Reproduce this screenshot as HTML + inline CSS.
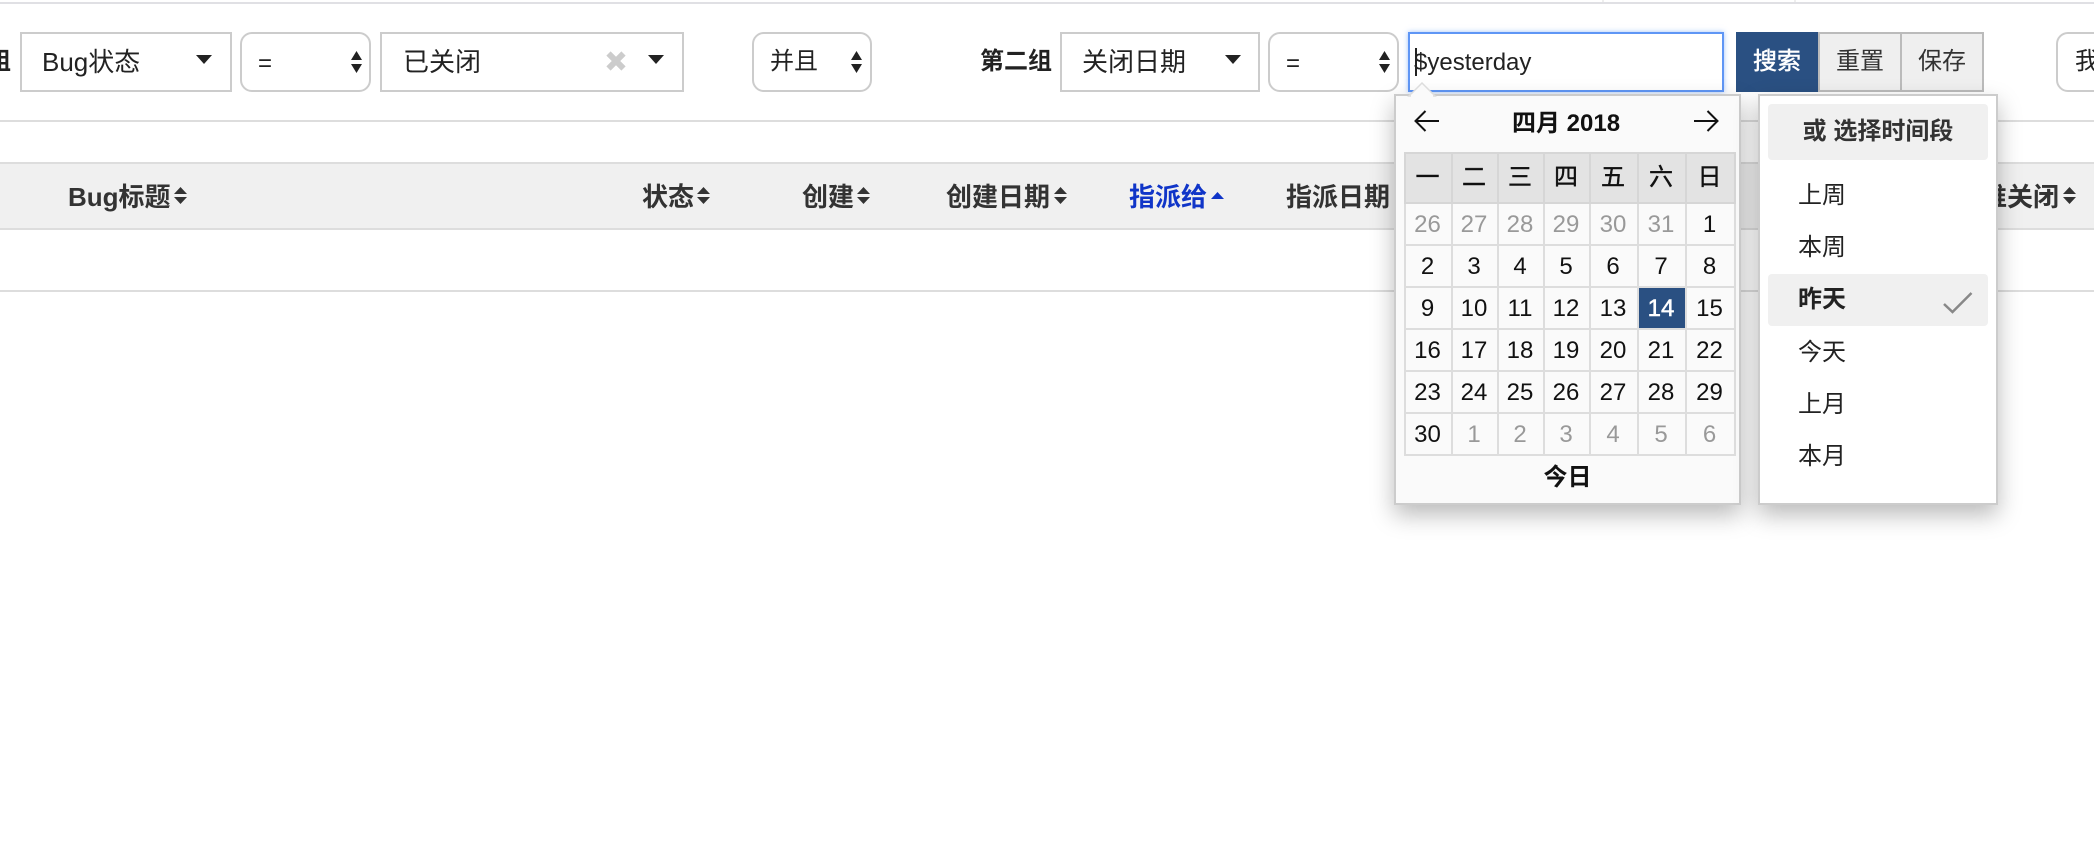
<!DOCTYPE html>
<html lang="zh"><head><meta charset="utf-8"><title>Bug</title>
<style>
html,body{margin:0;padding:0;background:#fff;}
body{position:relative;width:2094px;height:848px;overflow:hidden;font-family:"Liberation Sans","Noto Sans CJK SC",sans-serif;color:#222;font-size:26px;}
.a{position:absolute;box-sizing:border-box;}
.line{position:absolute;left:0;width:2094px;height:2px;background:#ddd;}
.sel{position:absolute;box-sizing:border-box;top:32px;height:60px;border:2px solid #ccc;background:#fff;line-height:56px;white-space:nowrap;}
.nat{border-radius:12px;font-size:24px;}
.t{position:absolute;white-space:nowrap;line-height:30px;}
.h{position:absolute;top:182px;font-weight:bold;color:#333;font-size:26px;line-height:30px;white-space:nowrap;}
.btn{position:absolute;box-sizing:border-box;top:32px;height:60px;border:2px solid #bbb;background:#efefef;font-size:24px;line-height:56px;text-align:center;color:#333;}
svg{position:absolute;display:block;overflow:visible;}
.panel{position:absolute;box-sizing:border-box;top:94px;height:411px;border:2px solid #ccc;box-shadow:0 10px 22px rgba(0,0,0,.27);}
table{position:absolute;left:8px;top:56px;width:330px;border-collapse:collapse;table-layout:fixed;font-size:24px;color:#111;}
td,th{border:2px solid #ddd;padding:0 2px 0 0;text-align:center;font-weight:normal;line-height:30px;}
th{background:#e3e3e3;height:48px;border-color:#d6d6d6;-webkit-text-stroke:.4px #111;}
td{height:38px;padding-top:2px;}
td.o{color:#999;}
td.s{background:#2a5082;color:#fff;-webkit-text-stroke:.5px #fff;}
.it{position:absolute;left:38px;font-size:24px;line-height:30px;color:#222;}
</style></head><body>
<div class="line" style="top:2px;height:2px;background:#e0e0e4"></div>
<div class="a" style="left:1602px;top:0;width:2px;height:2px;background:#eee"></div>
<div class="a" style="left:1794px;top:0;width:2px;height:2px;background:#eee"></div>
<div class="line" style="top:120px"></div>
<div class="a" style="left:0;top:162px;width:2094px;height:68px;background:#f0f0f0;border-top:2px solid #ddd;border-bottom:2px solid #ddd"></div>
<div class="line" style="top:290px"></div>

<div class="t" style="right:2083px;top:47px;font-size:24px;font-weight:bold">组</div>
<div class="sel" style="left:20px;width:212px;padding-left:20px">Bug状态</div>
<svg style="left:196px;top:55px" width="16" height="9"><path d="M0 0H16L8 9Z" fill="#222"/></svg>
<div class="sel nat" style="left:240px;width:131px;padding-left:16px;line-height:59px">=</div>
<svg style="left:351px;top:51px" width="11" height="22"><path d="M5.5 0L11 9H0Z M0 13H11L5.5 22Z" fill="#222"/></svg>
<div class="sel" style="left:380px;width:304px;padding-left:21px">已关闭</div>
<svg style="left:606px;top:51px" width="20" height="20"><path d="M2.5 2.5L17.5 17.5M17.5 2.5L2.5 17.5" stroke="#ccc" stroke-width="6"/></svg>
<svg style="left:648px;top:55px" width="16" height="9"><path d="M0 0H16L8 9Z" fill="#222"/></svg>

<div class="sel nat" style="left:752px;width:120px;padding-left:16px">并且</div>
<svg style="left:851px;top:51px" width="11" height="22"><path d="M5.5 0L11 9H0Z M0 13H11L5.5 22Z" fill="#222"/></svg>
<div class="t" style="left:980px;top:47px;font-size:24px;font-weight:bold">第二组</div>
<div class="sel" style="left:1060px;width:200px;padding-left:20px">关闭日期</div>
<svg style="left:1225px;top:55px" width="16" height="9"><path d="M0 0H16L8 9Z" fill="#222"/></svg>
<div class="sel nat" style="left:1268px;width:131px;padding-left:16px;line-height:59px">=</div>
<svg style="left:1379px;top:51px" width="11" height="22"><path d="M5.5 0L11 9H0Z M0 13H11L5.5 22Z" fill="#222"/></svg>

<div class="sel" style="left:1408px;width:316px;border-color:#5f96f5;box-shadow:0 0 5px rgba(90,147,245,.55);font-size:24px;padding-left:4px;line-height:57px">$yesterday</div>
<div class="a" style="left:1415px;top:48px;width:2px;height:28px;background:#222"></div>

<div class="btn" style="left:1736px;width:82px;background:#2a5082;border-color:#2a5082;color:#fff;-webkit-text-stroke:.5px #fff">搜索</div>
<div class="btn" style="left:1818px;width:84px">重置</div>
<div class="btn" style="left:1900px;width:84px">保存</div>
<div class="sel nat" style="left:2056px;width:80px;padding-left:17px">我</div>

<div class="h" style="left:68px">Bug标题</div>
<svg style="left:174px;top:187px" width="13" height="17"><path d="M6.5 0L13 7H0Z M0 10H13L6.5 17Z" fill="#333"/></svg>
<div class="h" style="left:642px">状态</div>
<svg style="left:697px;top:187px" width="13" height="17"><path d="M6.5 0L13 7H0Z M0 10H13L6.5 17Z" fill="#333"/></svg>
<div class="h" style="left:802px">创建</div>
<svg style="left:857px;top:187px" width="13" height="17"><path d="M6.5 0L13 7H0Z M0 10H13L6.5 17Z" fill="#333"/></svg>
<div class="h" style="left:946px">创建日期</div>
<svg style="left:1054px;top:187px" width="13" height="17"><path d="M6.5 0L13 7H0Z M0 10H13L6.5 17Z" fill="#333"/></svg>
<div class="h" style="left:1129px;color:#1035c8">指派给</div>
<svg style="left:1211px;top:192px" width="13" height="7"><path d="M6.5 0L13 7H0Z" fill="#1035c8"/></svg>
<div class="h" style="left:1286px">指派日期</div>
<div class="h" style="left:1955px">由谁关闭</div>
<svg style="left:2063px;top:187px" width="13" height="17"><path d="M6.5 0L13 7H0Z M0 10H13L6.5 17Z" fill="#333"/></svg>

<svg style="left:1409px;top:82px;z-index:3" width="26" height="14"><path d="M0 14L13 1L26 14Z" fill="#fafafa" stroke="#ddd" stroke-width="1.5"/><path d="M2 14H24" stroke="#fafafa" stroke-width="3"/></svg>
<div class="panel" style="left:1394px;width:347px;background:#fafafa;z-index:2">
  <svg style="left:18px;top:14px" width="26" height="22"><path d="M25 11H2M11.5 1L1.5 11L11.5 21" fill="none" stroke="#111" stroke-width="2"/></svg>
  <div class="t" style="left:116px;top:13px;font-size:24px;font-weight:bold;color:#111">四月 2018</div>
  <svg style="left:297px;top:14px" width="26" height="22"><path d="M1 11H24M14.5 1L24.5 11L14.5 21" fill="none" stroke="#111" stroke-width="2"/></svg>
  <table>
    <colgroup><col style="width:47px"><col style="width:46px"><col style="width:46px"><col style="width:46px"><col style="width:48px"><col style="width:48px"><col style="width:49px"></colgroup>
    <tr><th>一</th><th>二</th><th>三</th><th>四</th><th>五</th><th>六</th><th>日</th></tr>
    <tr><td class="o">26</td><td class="o">27</td><td class="o">28</td><td class="o">29</td><td class="o">30</td><td class="o">31</td><td>1</td></tr>
    <tr><td>2</td><td>3</td><td>4</td><td>5</td><td>6</td><td>7</td><td>8</td></tr>
    <tr><td>9</td><td>10</td><td>11</td><td>12</td><td>13</td><td class="s">14</td><td>15</td></tr>
    <tr><td>16</td><td>17</td><td>18</td><td>19</td><td>20</td><td>21</td><td>22</td></tr>
    <tr><td>23</td><td>24</td><td>25</td><td>26</td><td>27</td><td>28</td><td>29</td></tr>
    <tr><td>30</td><td class="o">1</td><td class="o">2</td><td class="o">3</td><td class="o">4</td><td class="o">5</td><td class="o">6</td></tr>
  </table>
  <div class="t" style="left:0;width:343px;text-align:center;top:367px;font-size:24px;font-weight:bold;color:#111">今日</div>
</div>

<div class="panel" style="left:1758px;width:240px;background:#fff;z-index:2">
  <div class="a" style="left:8px;top:8px;width:220px;height:56px;background:#f0f0f0;border-radius:4px;text-align:center;line-height:56px;font-size:24px;font-weight:bold;color:#333">或 选择时间段</div>
  <div class="it" style="top:85px">上周</div>
  <div class="it" style="top:137px">本周</div>
  <div class="a" style="left:8px;top:178px;width:220px;height:52px;background:#f0f0f0;border-radius:4px"></div>
  <div class="it" style="top:189px;font-weight:bold">昨天</div>
  <svg style="left:183px;top:196px" width="30" height="22"><path d="M1 12L9.5 20L28.5 1" fill="none" stroke="#888" stroke-width="2.5"/></svg>
  <div class="it" style="top:242px">今天</div>
  <div class="it" style="top:294px">上月</div>
  <div class="it" style="top:346px">本月</div>
</div>
</body></html>
